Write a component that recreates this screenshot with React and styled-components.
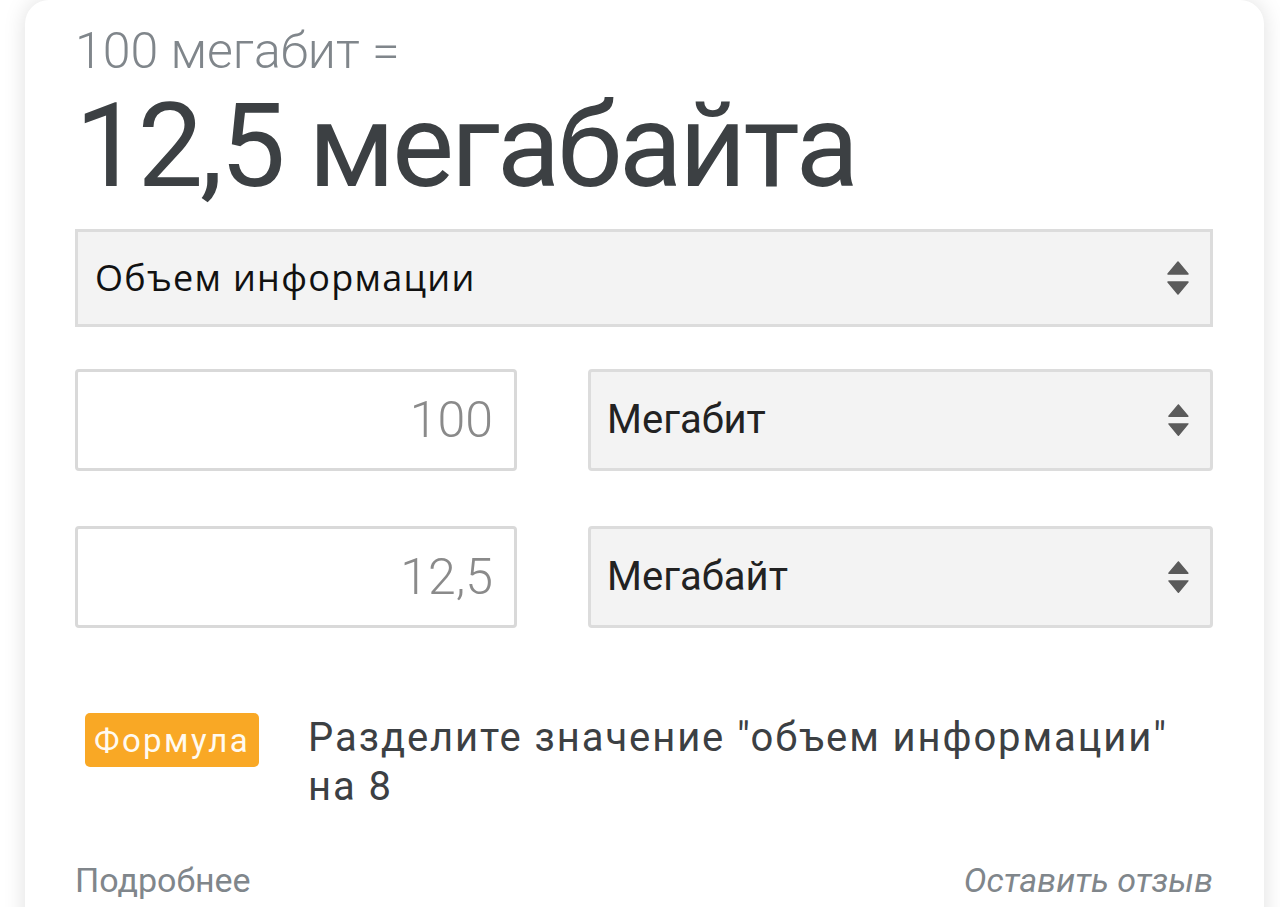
import React from 'react';
import styled, { createGlobalStyle } from 'styled-components';

const GlobalStyle = createGlobalStyle`
  html, body {
    margin: 0;
    padding: 0;
    background: #ffffff;
  }
  body {
    font-family: Roboto, "Noto Sans", sans-serif;
    overflow: hidden;
  }
`;

const Page = styled.div`
  width: 1280px;
  height: 907px;
  padding: 0 16px 0 25px;
  box-sizing: border-box;
  overflow: hidden;
`;

const Card = styled.div`
  background: #fff;
  border-radius: 24px 24px 0 0;
  box-shadow: 0 0 22px rgba(0, 0, 0, 0.13);
  padding: 26px 51px 40px 50px;
  min-height: 960px;
  box-sizing: border-box;
`;

const Equation = styled.div`
  font-size: 50px;
  font-weight: 300;
  line-height: 1;
  color: #80868b;
`;

const Result = styled.div`
  margin-top: 12px;
  font-size: 117px;
  line-height: 1;
  color: #3c4043;
  letter-spacing: -3.2px;
`;

const Select = styled.div`
  display: flex;
  align-items: center;
  justify-content: space-between;
  box-sizing: border-box;
  height: ${p => p.tall ? '102px' : '98px'};
  background: #f3f3f3;
  border: 3px solid #dcdcdc;
  border-radius: ${p => p.tall ? '4px' : '0'};
  padding: ${p => p.tall ? '0 20px 0 16px' : '0 20px 0 17px'};
`;

const SelectLabel = styled.span`
  font-family: ${p => p.main ? '"Open Sans", "Noto Sans"' : 'Roboto'}, sans-serif;
  font-size: ${p => p.main ? '36px' : '40px'};
  letter-spacing: ${p => p.main ? '1.3px' : '0'};
  line-height: 1;
  color: ${p => p.main ? '#111' : '#222'};
`;

const Category = styled(Select)`
  margin-top: 24px;
`;

const Grid = styled.div`
  display: grid;
  grid-template-columns: 442px 1fr;
  column-gap: 71px;
  row-gap: 55px;
  margin-top: 42px;
`;

const Input = styled.div`
  box-sizing: border-box;
  height: 102px;
  border: 3px solid #d9d9d9;
  border-radius: 4px;
  background: #fff;
  display: flex;
  align-items: center;
  justify-content: flex-end;
  padding-right: 21px;
  font-size: 50px;
  font-weight: 300;
  line-height: 1;
  color: #8a8a8a;
`;

const FormulaRow = styled.div`
  display: flex;
  align-items: flex-start;
  margin-top: 85px;
  padding-left: 10px;
`;

const Badge = styled.span`
  flex: none;
  box-sizing: border-box;
  height: 54px;
  padding: 0 9px 0 9px;
  display: flex;
  align-items: center;
  background: #f9a825;
  border-radius: 5px;
  color: #fffaf0;
  font-size: 33px;
  letter-spacing: 2.4px;
  line-height: 1;
`;

const FormulaText = styled.div`
  margin-left: 49px;
  font-size: 40px;
  letter-spacing: 1.9px;
  line-height: 49px;
  color: #3c4043;
`;

const Footer = styled.div`
  display: flex;
  justify-content: space-between;
  margin-top: 52px;
  font-size: 34px;
  line-height: 1;
  color: #80868b;
`;

const Feedback = styled.span`
  font-style: italic;
`;

const Arrows = ({ size = 1 }) => (
  <svg width={24 * size} height={36 * size} viewBox="0 0 24 36">
    <path d="M12 2 L22 14 L2 14 Z" fill="#5b5b5b" strokeLinejoin="round" stroke="#5b5b5b" strokeWidth="1.5" />
    <path d="M12 34 L22 22 L2 22 Z" fill="#5b5b5b" strokeLinejoin="round" stroke="#5b5b5b" strokeWidth="1.5" />
  </svg>
);

export default function App() {
  return (
    <Page>
      <GlobalStyle />
      <Card>
        <Equation>100 мегабит =</Equation>
        <Result>12,5 мегабайта</Result>

        <Category>
          <SelectLabel main>Объем информации</SelectLabel>
          <Arrows />
        </Category>

        <Grid>
          <Input>100</Input>
          <Select tall>
            <SelectLabel>Мегабит</SelectLabel>
            <Arrows size={0.95} />
          </Select>
          <Input>12,5</Input>
          <Select tall>
            <SelectLabel>Мегабайт</SelectLabel>
            <Arrows size={0.95} />
          </Select>
        </Grid>

        <FormulaRow>
          <Badge>Формула</Badge>
          <FormulaText>Разделите значение "объем информации" на 8</FormulaText>
        </FormulaRow>

        <Footer>
          <span>Подробнее</span>
          <Feedback>Оставить отзыв</Feedback>
        </Footer>
      </Card>
    </Page>
  );
}
